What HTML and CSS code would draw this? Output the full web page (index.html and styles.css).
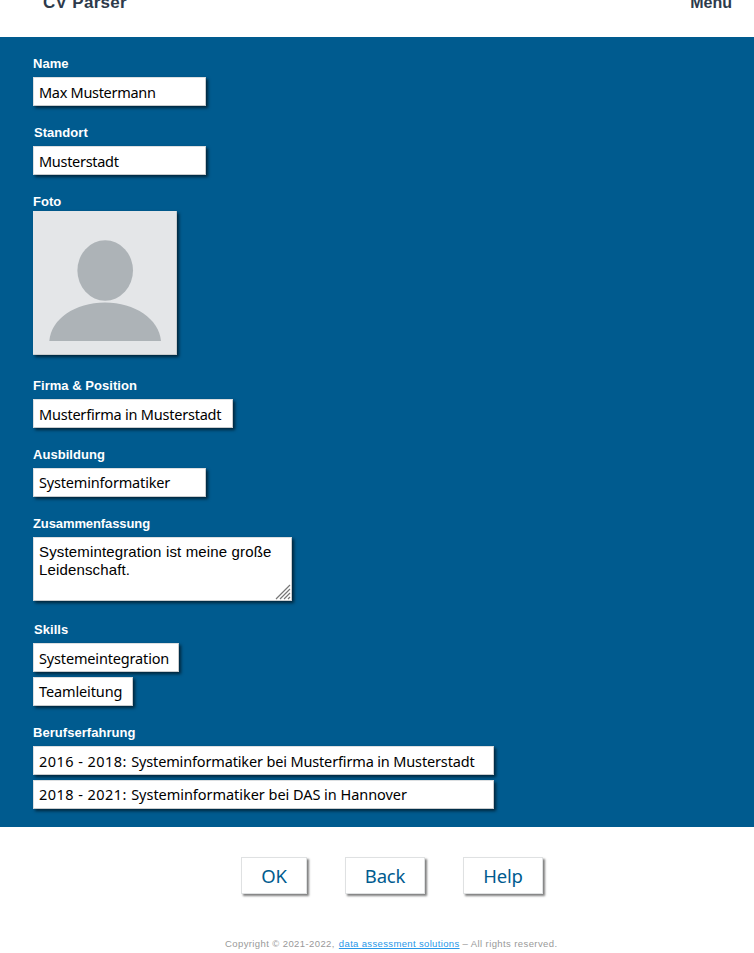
FILE: index.html
```html
<!DOCTYPE html>
<html lang="de">
<head>
<meta charset="utf-8">
<title>CV Parser</title>
<link rel="stylesheet" href="styles.css">
</head>
<body>
<header class="topbar"><span class="brand">CV Parser</span><span class="menu">Menu</span></header>
<main class="panel">
  <section class="field"><h2 class="label">Name</h2><div class="box medium name">Max Mustermann</div></section>
  <section class="field"><h2 class="label inset">Standort</h2><div class="box medium city">Musterstadt</div></section>
  <section class="field field-photo"><h2 class="label">Foto</h2>
    <svg class="photo" viewBox="0 0 144 144" role="img" aria-label="Foto">
      <rect width="144" height="144" fill="#c9cccd"/>
      <rect width="143" height="143" fill="#e4e6e8"/>
      <ellipse cx="72.2" cy="59.5" rx="27.8" ry="30.2" fill="#adb3b7"/>
      <path d="M16.300 130C18 108 42 91.500 72 91.500S126 108 128 130Z" fill="#adb3b7"/>
    </svg>
  </section>
  <section class="field"><h2 class="label">Firma &amp; Position</h2><div class="box firm">Musterfirma in Musterstadt</div></section>
  <section class="field"><h2 class="label">Ausbildung</h2><div class="box high medium job">Systeminformatiker</div></section>
  <section class="field field-summary"><h2 class="label long-label">Zusammenfassung</h2>
    <div class="box summary"><p class="summary-text">Systemintegration ist meine große<br>Leidenschaft.</p>
      <svg class="grip" viewBox="0 0 16 16"><path d="M1 15 15 1M5 15 15 5M9 15l6-6M13 15l2-2"/></svg>
    </div>
  </section>
  <section class="field"><h2 class="label inset">Skills</h2><div class="box skill-a">Systemeintegration</div><div class="box high skill-b">Teamleitung</div></section>
  <section class="field"><h2 class="label">Berufserfahrung</h2><div class="box career"><span class="years">2016 - 2018: </span>Systeminformatiker bei Musterfirma in Musterstadt</div><div class="box high career career-last"><span class="years">2018 - 2021: </span>Systeminformatiker bei DAS in Hannover</div></section>
</main>
<nav class="actions"><button class="btn ok">OK</button><button class="btn back">Back</button><button class="btn help">Help</button></nav>
<footer class="footer">Copyright © 2021-2022, <a class="link" href="#">data assessment solutions</a> – All rights reserved.</footer>
</body>
</html>
```
FILE: styles.css
```css
* { box-sizing: border-box; }
body { margin: 0; background: #fff; font-family: "Liberation Sans", Arial, sans-serif; height: 953px; overflow: hidden; }
.topbar { height: 37px; display: flex; justify-content: space-between; padding: 0 22px 0 43px; font-size: 16px; font-weight: bold; line-height: 20px; color: #2d3a4b; }
.brand, .menu { margin-top: -7px; }
.brand { font-size: 17px; letter-spacing: .3px; }
.panel { height: 790px; padding: 10px 33px 0; background: #005b8f; }
.field { margin-bottom: 10px; }
.label { margin: 0; height: 30px; padding-top: 9px; font-size: 13px; line-height: 16px; letter-spacing: .04px; color: #fff; }
.long-label { letter-spacing: -.1px; }
.inset { padding-left: 1px; }
.field-photo { margin-bottom: 14px; }
.field-photo .label { height: 26px; }
.photo { display: block; width: 144px; height: 144px; box-shadow: 2px 2px 3px rgba(0, 0, 0, .6); }
.box { height: 29px; padding: 0 5px; border: 1px solid; border-color: #dcdfe1 #c9ccce #c9ccce #dcdfe1; background: #fff; box-shadow: 2px 2px 3px rgba(0, 0, 0, .6); color: #000; font: 14.5px/29px "Noto Sans", sans-serif; letter-spacing: -.3px; white-space: nowrap; }
.high { line-height: 27px; }
.box + .box { margin-top: 5px; }
.medium { width: 173px; }
.firm { width: 200px; letter-spacing: -.22px; }
.job { letter-spacing: -.18px; }
.field-summary { margin-bottom: 12px; }
.box.summary { position: relative; width: 259px; height: 64px; padding-top: 5px; font: 15px/18px "Liberation Sans", sans-serif; letter-spacing: .15px; }
.summary-text { margin: 0; }
.grip { position: absolute; right: 0; bottom: 0; width: 16px; height: 16px; fill: none; stroke: #777; stroke-width: 1.2; }
.skill-a { width: 146px; letter-spacing: -.16px; }
.skill-b { width: 100px; letter-spacing: -.12px; }
.career { width: 461px; letter-spacing: -.15px; }
.career-last { letter-spacing: -.04px; }
.years { letter-spacing: .46px; }
.actions { display: flex; gap: 38px; padding: 30px 0 0 241px; }
.btn { height: 37px; padding: 0 0 1px; border: 1px solid #dfe1e2; background: #fff; box-shadow: 2px 2px 2px rgba(0, 0, 0, .5); color: #005b8f; font: 18.5px/36px "Noto Sans", sans-serif; letter-spacing: -.2px; }
.ok { width: 66px; }
.back { width: 80px; }
.help { width: 80px; }
.footer { margin: 43px 0 0 225px; font-size: 9.5px; line-height: 14px; color: #999; white-space: nowrap; letter-spacing: .4px; }
.link { color: #2997e8; letter-spacing: .35px; margin-left: 1px; }
```
